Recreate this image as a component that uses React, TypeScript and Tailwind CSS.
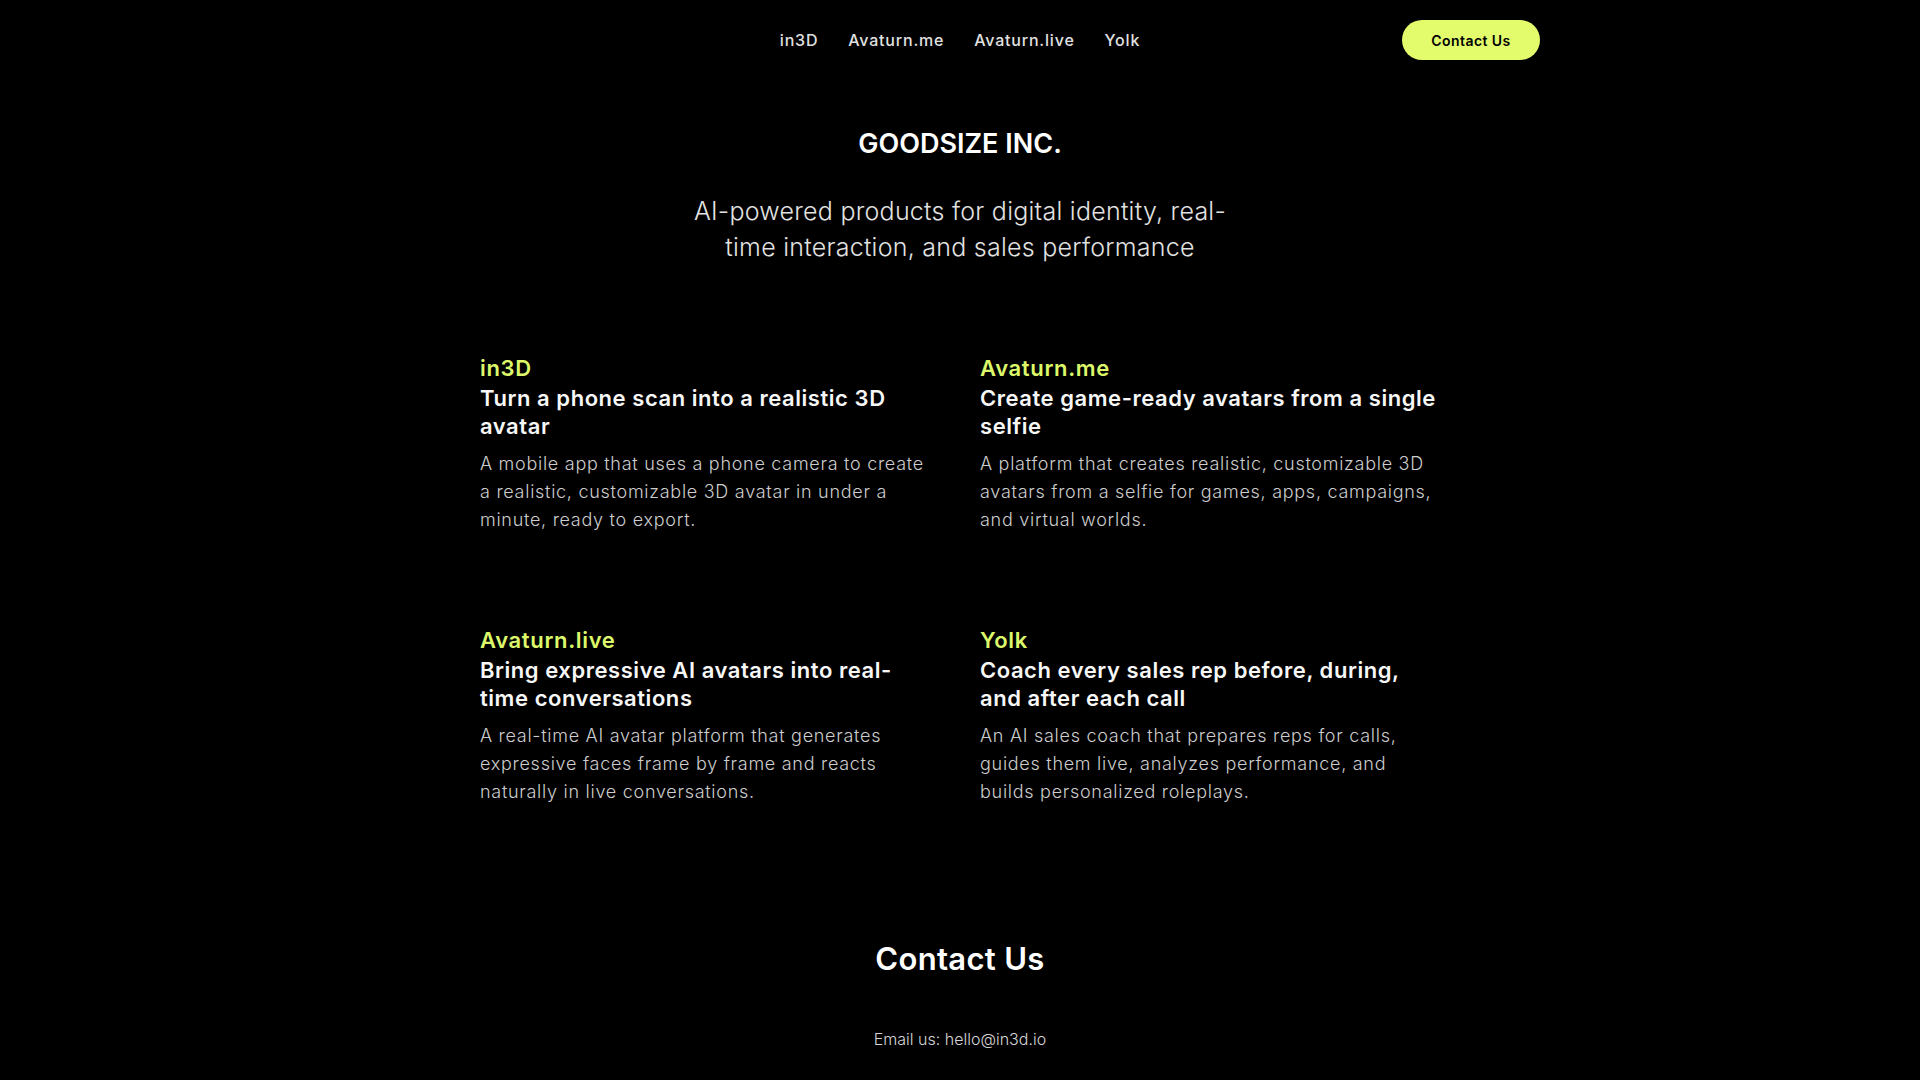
import React from 'react';

interface Product {
  name: string;
  title: string[];
  description: string[];
}

// copy is kept line by line so the cards break the same way at every width
const products: Product[] = [
  {
    name: 'in3D',
    title: ['Turn a phone scan into a realistic 3D', 'avatar'],
    description: [
      'A mobile app that uses a phone camera to create',
      'a realistic, customizable 3D avatar in under a',
      'minute, ready to export.',
    ],
  },
  {
    name: 'Avaturn.me',
    title: ['Create game-ready avatars from a single', 'selfie'],
    description: [
      'A platform that creates realistic, customizable 3D',
      'avatars from a selfie for games, apps, campaigns,',
      'and virtual worlds.',
    ],
  },
  {
    name: 'Avaturn.live',
    title: ['Bring expressive AI avatars into real-', 'time conversations'],
    description: [
      'A real-time AI avatar platform that generates',
      'expressive faces frame by frame and reacts',
      'naturally in live conversations.',
    ],
  },
  {
    name: 'Yolk',
    title: ['Coach every sales rep before, during,', 'and after each call'],
    description: [
      'An AI sales coach that prepares reps for calls,',
      'guides them live, analyzes performance, and',
      'builds personalized roleplays.',
    ],
  },
];

const navLinks = ['in3D', 'Avaturn.me', 'Avaturn.live', 'Yolk'];

const Lines: React.FC<{ lines: string[] }> = ({ lines }) => (
  <>
    {lines.map((line, i) => (
      <span key={i} className="block whitespace-nowrap">
        {line}
      </span>
    ))}
  </>
);

const Header: React.FC = () => (
  <header className="h-[80px]">
    <div className="w-[1160px] h-full mx-auto flex items-center justify-between">
      <div className="w-[138px]" />
      <nav className="flex items-center gap-[30px] text-[16px] font-medium tracking-[0.05em] text-[#e0e0e0]">
        {navLinks.map((link) => (
          <a key={link} href="#" className="hover:text-white">
            {link}
          </a>
        ))}
      </nav>
      <button className="w-[138px] h-[40px] rounded-full bg-[#e3fc6b] text-[14px] font-semibold tracking-[0.03em] text-black">
        Contact Us
      </button>
    </div>
  </header>
);

const ProductCard: React.FC<{ product: Product }> = ({ product }) => (
  <div className="flex flex-col">
    <span className="text-[22px] leading-[28px] font-semibold tracking-[0.03em] text-[#dcf86a]">
      {product.name}
    </span>
    <h3 className="mt-[2px] text-[22px] leading-[28px] font-semibold tracking-[0.025em] text-[#f7f7f7]">
      <Lines lines={product.title} />
    </h3>
    <p className="mt-[10px] text-[18px] leading-[28px] font-light tracking-[0.04em] text-[#cdcdcd]">
      <Lines lines={product.description} />
    </p>
  </div>
);

export default function App() {
  return (
    <div className="min-h-screen bg-black font-['Inter',sans-serif] antialiased">
      <Header />

      <section className="flex flex-col items-center text-center">
        <h1 className="mt-[47px] text-[27px] leading-[34px] font-semibold text-white">GOODSIZE INC.</h1>
        <p className="mt-[32px] text-[25px] leading-[36px] font-light tracking-[0.01em] text-[#e2e2e2]">
          <Lines lines={['AI-powered products for digital identity, real-', 'time interaction, and sales performance']} />
        </p>
      </section>

      <section className="mt-[89px] w-[960px] mx-auto grid grid-cols-2 gap-x-[40px] gap-y-[92px]">
        {products.map((p) => (
          <ProductCard key={p.name} product={p} />
        ))}
      </section>

      <section className="mt-[134px] pb-[28px] flex flex-col items-center">
        <h2 className="text-[31px] leading-[38px] font-semibold tracking-[0.01em] text-white">Contact Us</h2>
        <p className="mt-[49px] text-[16px] leading-[24px] font-light text-[#d6d6d6]">Email us: hello@in3d.io</p>
      </section>
    </div>
  );
}
